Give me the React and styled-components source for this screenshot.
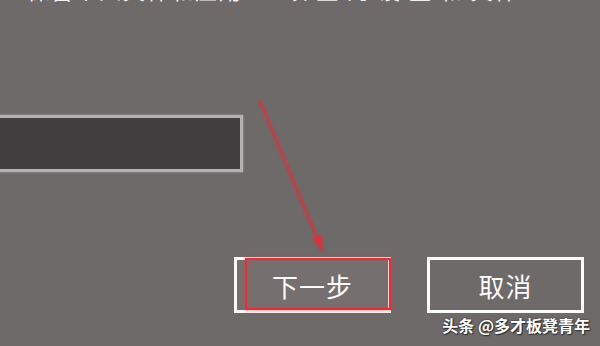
import React from 'react'
import styled, { createGlobalStyle } from 'styled-components'

const GlobalStyle = createGlobalStyle`
    html, body {
        margin: 0;
        padding: 0;
        background: #6e6a69;
    }
    body {
        font-family: "Noto Sans CJK SC", "Noto Sans", sans-serif;
    }
`;

const Screen = styled.div`
    position: relative;
    width: 600px;
    height: 346px;
    overflow: hidden;
    background: #6e6a69;
    display: flex;
    flex-direction: column;
`;

// only the bottom of this line is left in the crop
const Heading = styled.div`
    margin: -25px 0 0 -4px;
    height: 28px;
    font-size: 22px;
    line-height: 28px;
    color: #f2f0ee;
    white-space: nowrap;
    letter-spacing: 2px;
`;

const NameInput = styled.div`
    margin: 112px 0 0 -10px;
    width: 247px;
    height: 51px;
    background: #403e3e;
    border: 3px solid #b4b2b0;
    box-shadow: 0 0 2px rgba(220, 218, 216, .5);
`;

const ButtonRow = styled.div`
    display: flex;
    justify-content: flex-end;
    gap: 36px;
    margin-top: 85px;
    padding-right: 16px;
`;

const Button = styled.div`
    position: relative;
    display: flex;
    justify-content: center;
    align-items: center;
    box-sizing: border-box;
    width: ${props => props.wide}px;
    height: 56px;
    border: 3px solid #fafafa;
    background: ${props => props.marked ? '#75706f' : '#6e6a69'};
    color: #fbfbfb;
    font-size: 26px;
    letter-spacing: 1px;
`;

const Mark = styled.div`
    position: absolute;
    top: -2px;
    bottom: 0;
    left: 8px;
    right: -3px;
    border: 2px solid #d9343c;
    box-shadow: 0 0 4px rgba(230, 60, 70, .7), inset 0 0 4px rgba(230, 60, 70, .5);
`;

const Label = styled.span`
    position: relative;
`;

const Watermark = styled.div`
    position: absolute;
    right: 10px;
    bottom: 9px;
    font-size: 16px;
    font-weight: 700;
    color: #ffffff;
    text-shadow: 0 0 2px #222, 1px 1px 1px #333;
    white-space: nowrap;
`;

const Arrow = styled.svg`
    position: absolute;
    left: 0;
    top: 0;
    pointer-events: none;
`;

const App = () => {
    return (
        <Screen>
            <GlobalStyle/>
            <Heading>一 保留个人文件和应用 10 以 上 的 设 置 和 文件</Heading>
            <NameInput/>
            <ButtonRow>
                <Button wide={157} marked>
                    <Mark/>
                    <Label>下一步</Label>
                </Button>
                <Button wide={157}>
                    <Label>取消</Label>
                </Button>
            </ButtonRow>
            <Arrow width="600" height="346" viewBox="0 0 600 346">
                <defs>
                    <filter id="glow" x="-20%" y="-20%" width="140%" height="140%">
                        <feGaussianBlur stdDeviation="0.8"/>
                    </filter>
                </defs>
                <g filter="url(#glow)">
                    <line x1="260" y1="101" x2="318" y2="240" stroke="#d8313a" strokeWidth="2.4" strokeLinecap="round"/>
                    <polygon points="323,253 312,238 322,235" fill="#d8313a"/>
                </g>
            </Arrow>
            <Watermark>头条 @多才板凳青年</Watermark>
        </Screen>
    )
}

export default App
